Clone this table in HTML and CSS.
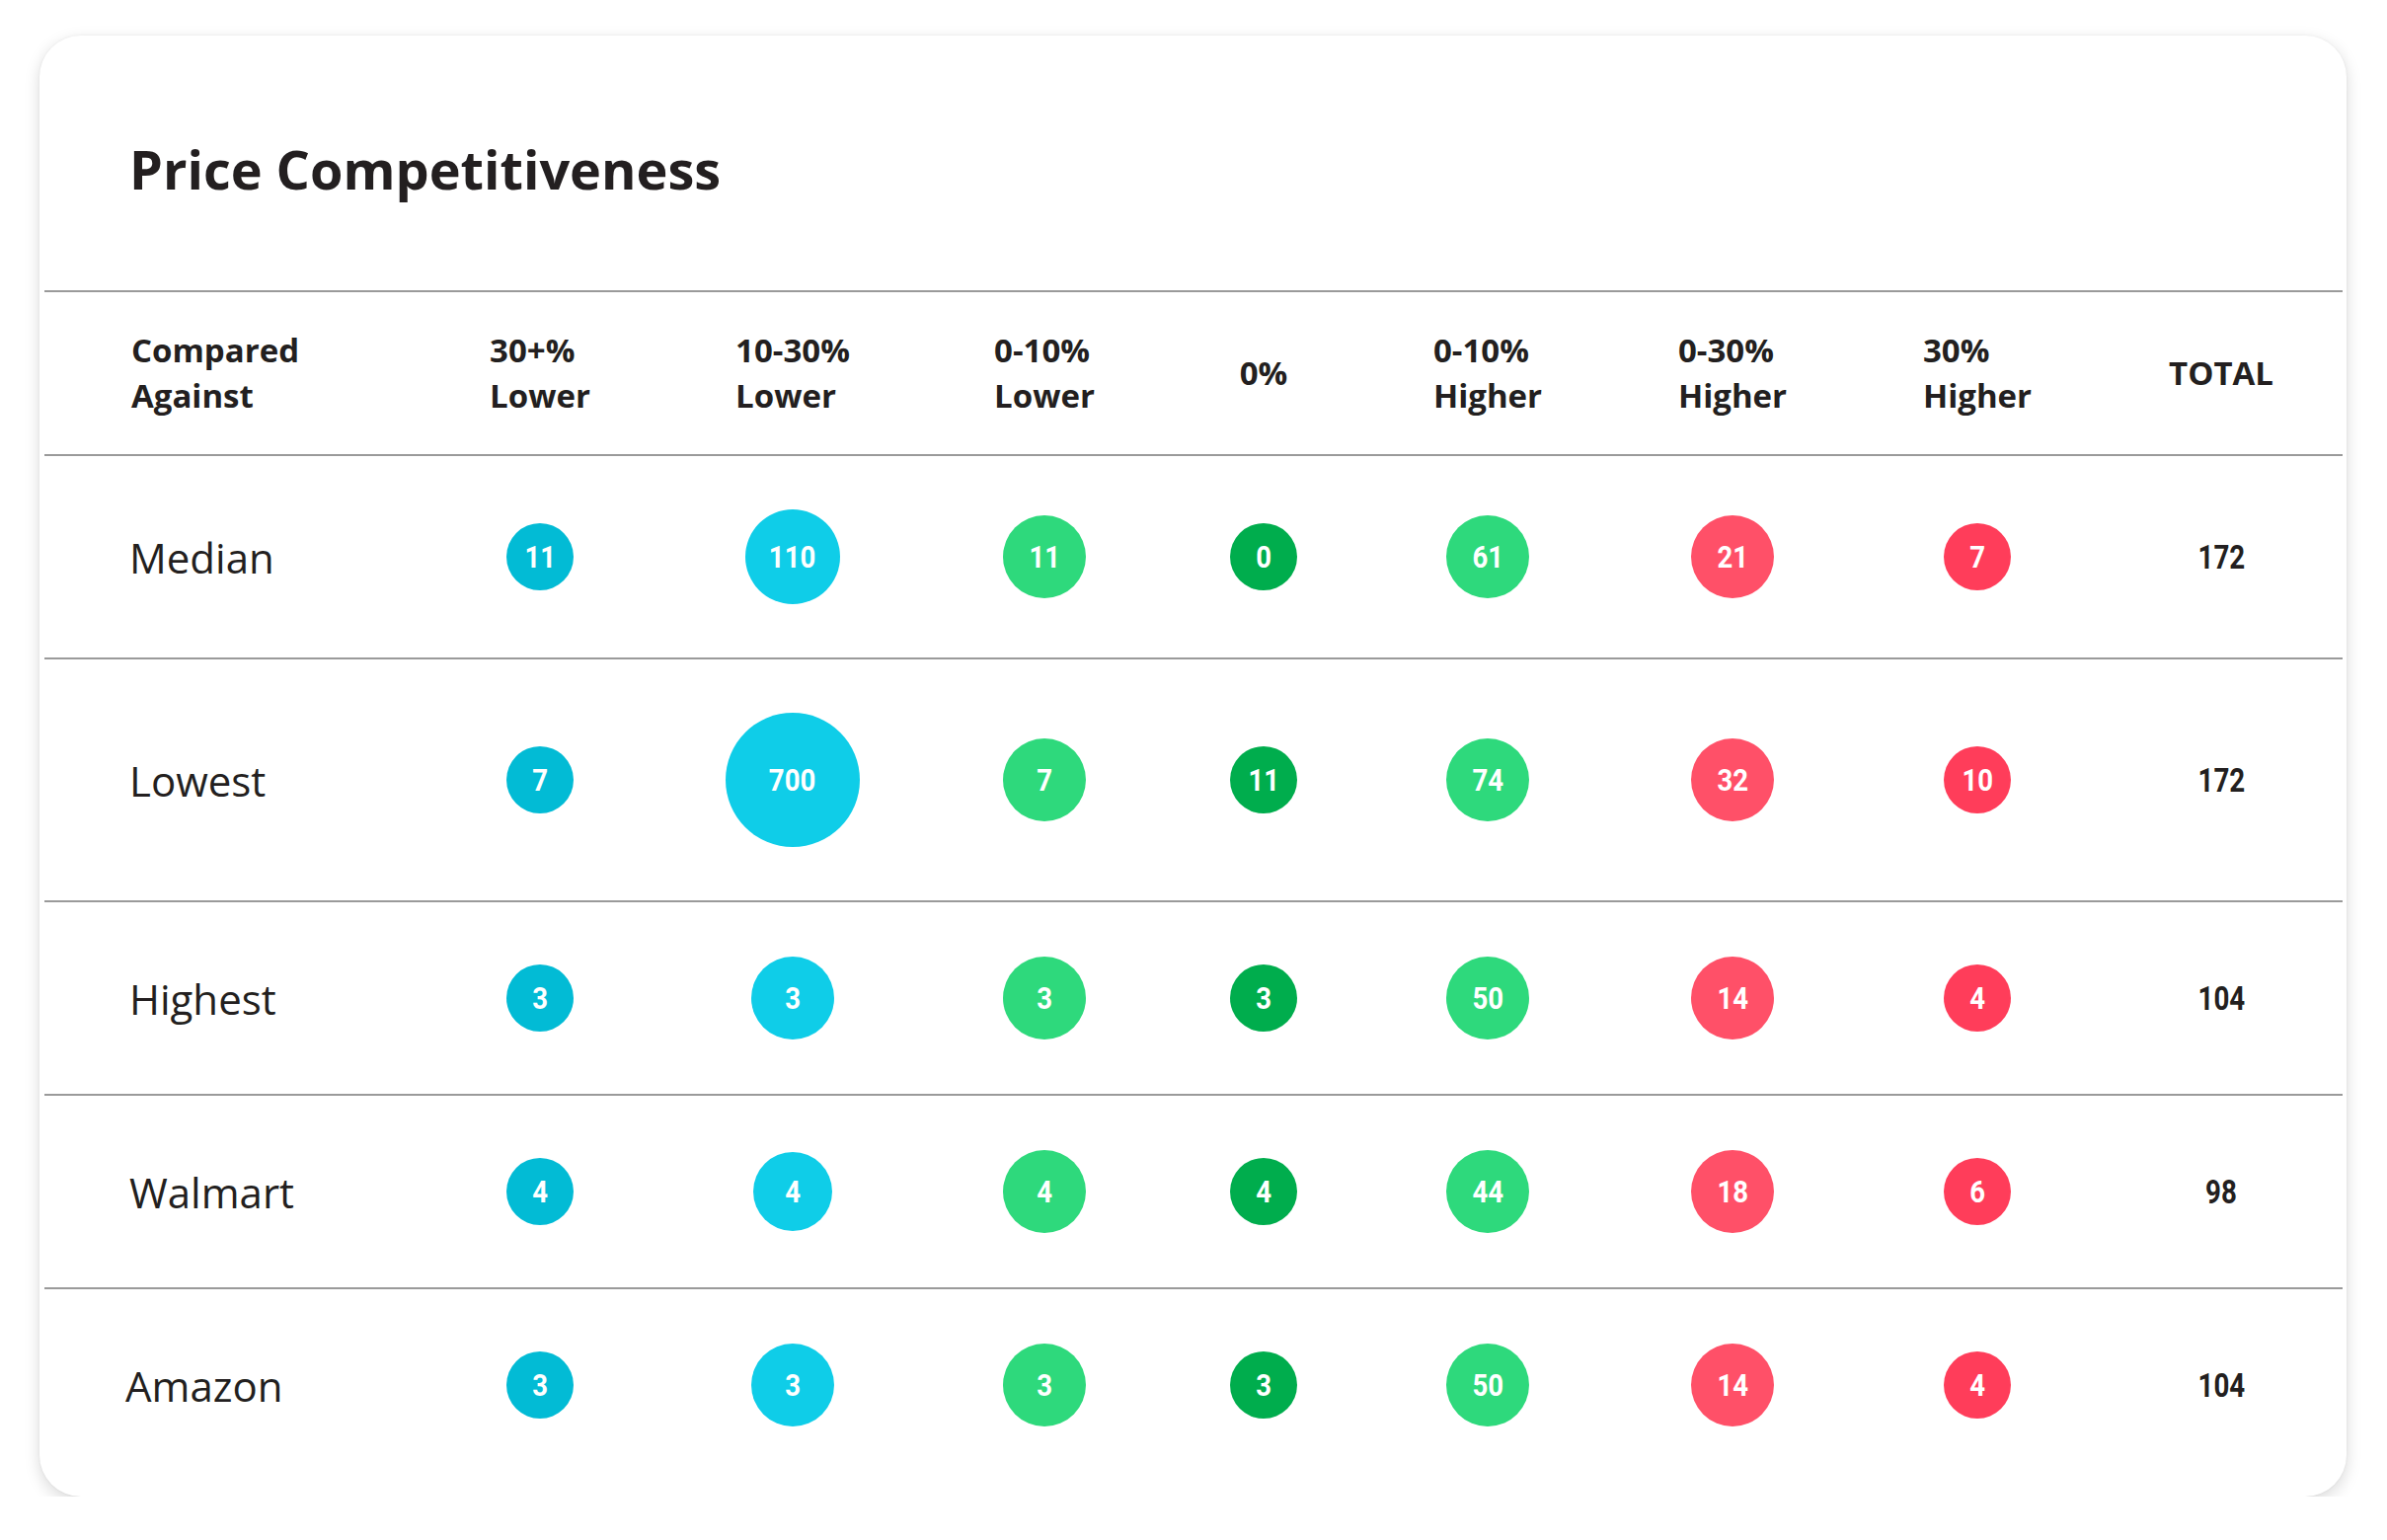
FILE: index.html
```html
<!DOCTYPE html>
<html lang="en">
<head>
<meta charset="utf-8">
<title>Price Competitiveness</title>
<link rel="stylesheet" href="styles.css">
</head>
<body>
<div class="card">
  <h1 class="title">Price Competitiveness</h1>
  <div class="table">
    <div class="row head">
      <div class="cell label-cell"><span class="hd">Compared<br>Against</span></div>
      <div class="cell"><span class="hd">30+%<br>Lower</span></div>
      <div class="cell"><span class="hd">10-30%<br>Lower</span></div>
      <div class="cell"><span class="hd">0-10%<br>Lower</span></div>
      <div class="cell"><span class="hd">0%</span></div>
      <div class="cell"><span class="hd">0-10%<br>Higher</span></div>
      <div class="cell"><span class="hd">0-30%<br>Higher</span></div>
      <div class="cell"><span class="hd">30%<br>Higher</span></div>
      <div class="cell"><span class="hd">TOTAL</span></div>
    </div>

    <div class="row">
      <div class="cell label-cell"><span class="label">Median</span></div>
      <div class="cell"><span class="dot c1 s68"><span class="num">11</span></span></div>
      <div class="cell"><span class="dot c2 s96"><span class="num">110</span></span></div>
      <div class="cell"><span class="dot c3 s84"><span class="num">11</span></span></div>
      <div class="cell"><span class="dot c4 s68"><span class="num">0</span></span></div>
      <div class="cell"><span class="dot c3 s84"><span class="num">61</span></span></div>
      <div class="cell"><span class="dot c6 s84"><span class="num">21</span></span></div>
      <div class="cell"><span class="dot c7 s68"><span class="num">7</span></span></div>
      <div class="cell"><span class="total">172</span></div>
    </div>

    <div class="row">
      <div class="cell label-cell"><span class="label">Lowest</span></div>
      <div class="cell"><span class="dot c1 s68"><span class="num">7</span></span></div>
      <div class="cell"><span class="dot c2 s136"><span class="num">700</span></span></div>
      <div class="cell"><span class="dot c3 s84"><span class="num">7</span></span></div>
      <div class="cell"><span class="dot c4 s68"><span class="num">11</span></span></div>
      <div class="cell"><span class="dot c3 s84"><span class="num">74</span></span></div>
      <div class="cell"><span class="dot c6 s84"><span class="num">32</span></span></div>
      <div class="cell"><span class="dot c7 s68"><span class="num">10</span></span></div>
      <div class="cell"><span class="total">172</span></div>
    </div>

    <div class="row">
      <div class="cell label-cell"><span class="label">Highest</span></div>
      <div class="cell"><span class="dot c1 s68"><span class="num">3</span></span></div>
      <div class="cell"><span class="dot c2 s84"><span class="num">3</span></span></div>
      <div class="cell"><span class="dot c3 s84"><span class="num">3</span></span></div>
      <div class="cell"><span class="dot c4 s68"><span class="num">3</span></span></div>
      <div class="cell"><span class="dot c3 s84"><span class="num">50</span></span></div>
      <div class="cell"><span class="dot c6 s84"><span class="num">14</span></span></div>
      <div class="cell"><span class="dot c7 s68"><span class="num">4</span></span></div>
      <div class="cell"><span class="total">104</span></div>
    </div>

    <div class="row">
      <div class="cell label-cell"><span class="label">Walmart</span></div>
      <div class="cell"><span class="dot c1 s68"><span class="num">4</span></span></div>
      <div class="cell"><span class="dot c2 s80"><span class="num">4</span></span></div>
      <div class="cell"><span class="dot c3 s84"><span class="num">4</span></span></div>
      <div class="cell"><span class="dot c4 s68"><span class="num">4</span></span></div>
      <div class="cell"><span class="dot c3 s84"><span class="num">44</span></span></div>
      <div class="cell"><span class="dot c6 s84"><span class="num">18</span></span></div>
      <div class="cell"><span class="dot c7 s68"><span class="num">6</span></span></div>
      <div class="cell"><span class="total">98</span></div>
    </div>

    <div class="row last">
      <div class="cell label-cell"><span class="label amazon">Amazon</span></div>
      <div class="cell"><span class="dot c1 s68"><span class="num">3</span></span></div>
      <div class="cell"><span class="dot c2 s84"><span class="num">3</span></span></div>
      <div class="cell"><span class="dot c3 s84"><span class="num">3</span></span></div>
      <div class="cell"><span class="dot c4 s68"><span class="num">3</span></span></div>
      <div class="cell"><span class="dot c3 s84"><span class="num">50</span></span></div>
      <div class="cell"><span class="dot c6 s84"><span class="num">14</span></span></div>
      <div class="cell"><span class="dot c7 s68"><span class="num">4</span></span></div>
      <div class="cell"><span class="total">104</span></div>
    </div>
  </div>
</div>
</body>
</html>
```

FILE: styles.css
```css
html, body {
  margin: 0;
  padding: 0;
  background: #ffffff;
}

body {
  font-family: "Open Sans", "Noto Sans", sans-serif;
  color: #231f20;
  padding: 36px 0 0 40px;
}

.card {
  box-sizing: border-box;
  width: 2337px;
  height: 1480px;
  background: #ffffff;
  border-radius: 42px;
  box-shadow: 0 5px 16px rgba(0, 0, 0, 0.15), 0 0 3px rgba(0, 0, 0, 0.06);
  padding: 98px 4px 16px 5px;
}

.title {
  margin: 0 0 86px 86px;
  font-size: 54px;
  line-height: 74px;
  font-weight: 700;
  color: #231f20;
}

.table {
  border-top: 2px solid #9a9a9a;
}

.row {
  display: grid;
  grid-template-columns: 374px 256px 256px 254px 190px 264px 232px 264px 230px;
  align-items: center;
  min-height: 194px;
  border-bottom: 2px solid #9a9a9a;
}

.row.last {
  border-bottom: none;
}

.row.head {
  min-height: 0;
  height: 164px;
}

.cell {
  display: flex;
  justify-content: center;
  align-items: center;
  padding: 54px 0;
}

.head .cell {
  padding: 0;
}

.label-cell {
  justify-content: flex-start;
  padding-left: 86px;
}

.head .label-cell {
  padding-left: 88px;
}

.hd {
  display: inline-block;
  text-align: left;
  font-size: 33px;
  line-height: 46px;
  font-weight: 700;
  color: #231f20;
}

.label {
  font-size: 42px;
  font-weight: 400;
  color: #231f20;
}

.label.amazon {
  margin-left: -4px;
}

.dot {
  display: flex;
  justify-content: center;
  align-items: center;
  border-radius: 50%;
  flex: none;
}

.s68 { width: 68px; height: 68px; }
.s80 { width: 80px; height: 80px; }
.s84 { width: 84px; height: 84px; }
.s96 { width: 96px; height: 96px; }
.s136 { width: 136px; height: 136px; }

.c1 { background: #02bbd5; }
.c2 { background: #0fcde8; }
.c3 { background: #2ed97c; }
.c4 { background: #00ad4d; }
.c6 { background: #ff5068; }
.c7 { background: #ff3d5a; }

.num {
  display: inline-block;
  font-family: "Roboto", "Liberation Sans", sans-serif;
  font-weight: 700;
  font-size: 32px;
  line-height: 1;
  color: #ffffff;
  transform: scaleX(0.86);
}

.total {
  display: inline-block;
  font-family: "Roboto", "Liberation Sans", sans-serif;
  font-weight: 700;
  font-size: 33px;
  line-height: 1;
  color: #231f20;
  transform: scaleX(0.84);
}
```
